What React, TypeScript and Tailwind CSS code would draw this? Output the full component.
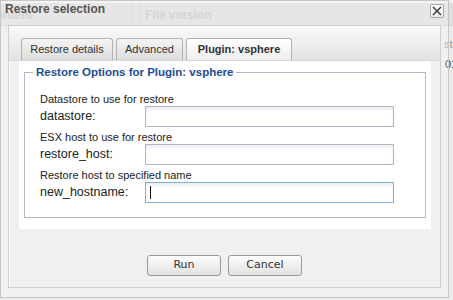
const tabs = [
  { label: 'Restore details', w: 'w-[92px]', active: false },
  { label: 'Advanced', w: 'w-[67px]', active: false },
  { label: 'Plugin: vsphere', w: 'w-[106px]', active: true },
];

const fields = [
  { hint: 'Datastore to use for restore', name: 'datastore:', focus: false },
  { hint: 'ESX host to use for restore', name: 'restore_host:', focus: false },
  { hint: 'Restore host to specified name', name: 'new_hostname:', focus: true },
];

function CloseIcon() {
  return (
    <svg width="10" height="10" viewBox="0 0 10 10">
      <path d="M1 1L9 9M9 1L1 9" stroke="#333" strokeWidth="1.4" fill="none" />
    </svg>
  );
}

export default function App() {
  return (
    <div className="relative w-[453px] h-[300px] overflow-hidden bg-[#ebebeb] font-['Liberation_Sans',Arial,sans-serif]">
      {/* grid of the page behind the dialog */}
      <div className="flex h-[26px] border-t-[3px] border-t-[#f0f0f0] border-b border-b-[#d4d4d4] bg-[#dedede] text-[12px] font-bold text-[#c6c6c6]">
        <div className="flex w-[133px] items-end border-r border-[#d0d0d0] pb-[1px]">
          <span className="-ml-[13px]">Content</span>
        </div>
        <div className="ml-[6px] flex flex-1 items-end border-l border-[#d0d0d0] pb-[1px] pl-[5px]">File version</div>
      </div>
      <div className="pl-[444px] pt-[8px] text-[11px] leading-[20px] whitespace-nowrap">
        <div className="text-[#999]">stem</div>
        <div className="pl-[1px] text-[#333]">01/03/2013</div>
      </div>

      {/* dialog */}
      <div className="absolute left-0 top-0 flex h-[298px] w-[449px] flex-col border border-[#c6c6c6] bg-white/25">
        <div className="flex h-[24px] items-start justify-between">
          <span className="pl-[4px] pt-[1px] text-[12px] font-bold leading-[14px] text-[#555]">Restore selection</span>
          <button className="mr-[4px] mt-[3px] flex h-[14px] w-[14px] items-center justify-center rounded-[2px] border border-[#a8a8a8] bg-linear-to-b from-white to-[#ececec]">
            <CloseIcon />
          </button>
        </div>

        <div className="ml-[7px] flex h-[263px] w-[433px] flex-col border border-[#cfcfcf] bg-[#f0f0f0] shadow-[inset_1px_1px_0_#fff]">
          <div className="flex h-[35px] items-end gap-[3px] border-b border-[#d6d6d6] bg-linear-to-b from-[#fafafa] to-[#e2e2e2] pl-[12px]">
            {tabs.map((t) => (
              <div
                key={t.label}
                className={`${t.w} flex h-[22px] items-center justify-center rounded-t-[3px] border border-b-0 border-[#b2b2b2] text-[11px] text-[#333] ${
                  t.active ? 'bg-linear-to-b from-white to-[#ededed] font-bold text-[#222]' : 'bg-linear-to-b from-[#f5f5f5] to-[#dcdcdc]'
                }`}
              >
                {t.label}
              </div>
            ))}
          </div>

          <div className="ml-[10px] h-[168px] w-[412px] bg-white px-[5px] pt-[4px]">
            <fieldset className="border border-[#b6b6c6] px-[8px] pb-[14px]">
              <legend className="px-[3px] text-[11.5px] font-bold leading-[14px] text-[#1d4b97]">
                Restore Options for Plugin: vsphere
              </legend>
              <div className="flex flex-col gap-[4px] pl-[7px] pt-[14px]">
                {fields.map((f) => (
                  <div key={f.name} className="flex flex-col">
                    <div className="text-[11px] leading-[13px] text-[#222]">{f.hint}</div>
                    <div className="flex h-[21px] items-center">
                      <label className="w-[105px] text-[12.5px] text-[#222]">{f.name}</label>
                      <div
                        className={`flex h-[21px] w-[249px] items-center border pl-[4px] shadow-[inset_0_3px_3px_rgba(200,210,210,0.35)] ${
                          f.focus ? 'border-[#7fb0df]' : 'border-[#b5b5c8]'
                        }`}
                      >
                        {f.focus && <span className="h-[13px] w-px bg-[#111]" />}
                      </div>
                    </div>
                  </div>
                ))}
              </div>
            </fieldset>
          </div>

          <div className="mt-[26px] flex justify-center gap-[7px] font-['DejaVu_Sans',sans-serif] text-[11px] text-[#333]">
            <button className="h-[21px] w-[74px] rounded-[3px] border border-[#9a9a9a] bg-linear-to-b from-[#fdfdfd] to-[#e2e2e2] shadow-[inset_0_1px_0_#fff]">
              Run
            </button>
            <button className="h-[21px] w-[74px] rounded-[3px] border border-[#9a9a9a] bg-linear-to-b from-[#fdfdfd] to-[#e2e2e2] shadow-[inset_0_1px_0_#fff]">
              Cancel
            </button>
          </div>
        </div>
      </div>
    </div>
  );
}
